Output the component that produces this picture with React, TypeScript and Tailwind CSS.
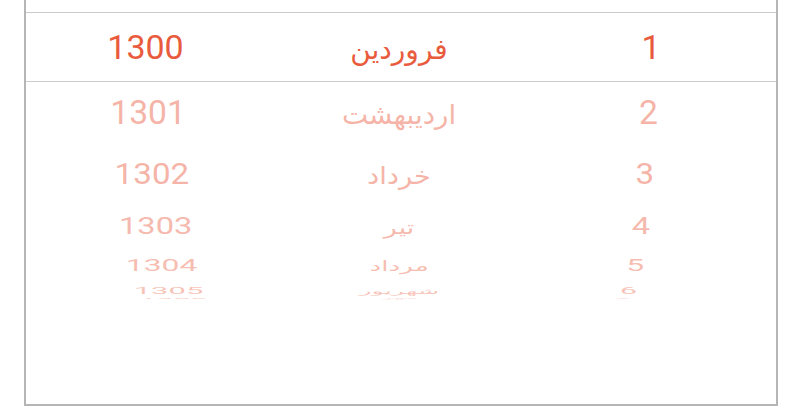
import React from "react";

type Row = { year: string; month: string; day: string; h: number; sx: number; sy: number; o: number };

const rows: Row[] = [
  { year: "1301", month: "اردیبهشت", day: "2", h: 62, sx: 0.99, sy: 0.95, o: 0.45 },
  { year: "1302", month: "خرداد", day: "3", h: 60, sx: 0.975, sy: 0.86, o: 0.45 },
  { year: "1303", month: "تیر", day: "4", h: 44, sx: 0.96, sy: 0.68, o: 0.42 },
  { year: "1304", month: "مرداد", day: "5", h: 34, sx: 0.937, sy: 0.5, o: 0.4 },
  { year: "1305", month: "شهریور", day: "6", h: 12, sx: 0.91, sy: 0.28, o: 0.36 },
  { year: "1306", month: "مهر", day: "7", h: 6, sx: 0.89, sy: 0.07, o: 0.3 },
];

function Cells({ year, month, day }: { year: string; month: string; day: string }) {
  return (
    <>
      <div className="flex items-center justify-center pr-[11px]">{year}</div>
      <div className="flex items-center justify-center pt-[5px] pr-[4px] text-[28px]">{month}</div>
      <div className="flex items-center justify-center">{day}</div>
    </>
  );
}

export default function App() {
  return (
    <div className="w-[788px] h-[412px] bg-white" style={{ fontFamily: "Roboto, 'DejaVu Sans', sans-serif" }}>
      <div className="ml-[24px] w-[754px] h-[406px] border-x-2 border-b-2 border-[#b5b5b5] bg-white pt-[12px] text-[#e95b3d] text-[34px] leading-none overflow-hidden">
        <div className="h-[70px] border-y border-[#cccccc] grid grid-cols-3">
          <Cells year="1300" month="فروردین" day="1" />
        </div>
        {rows.map((r) => (
          <div key={r.year} className="overflow-visible" style={{ height: r.h }}>
            <div
              className="h-full grid grid-cols-3 origin-center"
              style={{ transform: `scale(${r.sx}, ${r.sy})`, opacity: r.o }}
            >
              <Cells year={r.year} month={r.month} day={r.day} />
            </div>
          </div>
        ))}
      </div>
    </div>
  );
}
